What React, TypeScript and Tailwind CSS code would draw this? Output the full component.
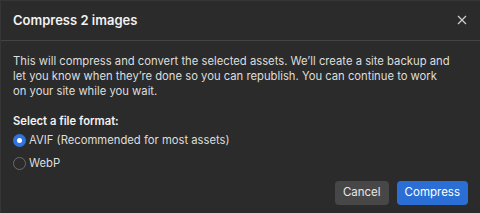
import { useState } from "react";

const formats = [
  { id: "avif", label: "AVIF (Recommended for most assets)" },
  { id: "webp", label: "WebP" },
];

export default function App() {
  const [format, setFormat] = useState("avif");

  return (
    <div className="w-[480px] h-[213px] bg-[#2b2b2b] border-t border-l border-[#363636] text-[#e6e6e6] font-[Inter,sans-serif] flex flex-col">
      <div className="h-[40px] flex items-center justify-between pl-[12px] pr-[13px] border-b border-[#444444]">
        <h2 className="text-[13px] font-semibold text-[#f2f2f2]">Compress 2 images</h2>
        <button className="text-[#cfcfcf] -mt-[1px]" aria-label="Close">
          <svg width="10" height="10" viewBox="0 0 10 10" fill="none" stroke="currentColor" strokeWidth="1.2">
            <path d="M1 1l8 8M9 1l-8 8" />
          </svg>
        </button>
      </div>

      <div className="px-[12px] pt-[13px] flex flex-col flex-1">
        <p className="-mr-[8px] text-[11.25px] leading-[15px] text-[#dedede] whitespace-nowrap">
          This will compress and convert the selected assets. We’ll create a site backup and
          <br />
          let you know when they’re done so you can republish. You can continue to work
          <br />
          on your site while you wait.
        </p>

        <p className="mt-[14px] text-[11.25px] font-semibold text-[#f2f2f2]">Select a file format:</p>

        <div className="mt-[2px] flex flex-col gap-[5px]">
          {formats.map((f) => (
            <label key={f.id} className="flex items-center gap-[3px] h-[18px] cursor-pointer">
              <span
                onClick={() => setFormat(f.id)}
                className={
                  format === f.id
                    ? "w-[13px] h-[13px] rounded-full bg-[#2f73de] flex items-center justify-center"
                    : "w-[13px] h-[13px] rounded-full border border-[#6a6a6a]"
                }
              >
                {format === f.id && <span className="w-[5px] h-[5px] rounded-full bg-white" />}
              </span>
              <span className="text-[11.25px] text-[#dedede]" onClick={() => setFormat(f.id)}>
                {f.label}
              </span>
            </label>
          ))}
        </div>

        <div className="mt-auto mb-[8px] flex justify-end gap-[8px]">
          <button className="h-[24px] px-[8px] rounded-[4px] bg-[#474747] text-[11.5px] text-[#e8e8e8]">
            Cancel
          </button>
          <button className="h-[24px] px-[8px] rounded-[4px] bg-[#2b6fd6] text-[11.5px] text-white">
            Compress
          </button>
        </div>
      </div>
    </div>
  );
}
